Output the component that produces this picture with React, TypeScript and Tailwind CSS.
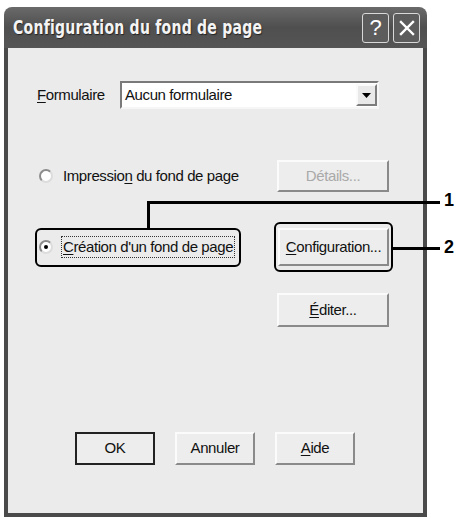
import React from "react";

const font = { fontFamily: '"Liberation Sans", Arial, sans-serif' };

// classic raised push button
function Btn({ label, u, rest, width = "w-[112px]", h = "h-[34px]", disabled = false, isDefault = false }: {
  label?: string;
  u: string;
  rest: string;
  width?: string;
  h?: string;
  disabled?: boolean;
  isDefault?: boolean;
}) {
  return (
    <div
      className={`${width} ${h} flex items-center justify-center bg-[#ededed] text-[15px] tracking-[-0.4px] ${
        isDefault ? "border-2 border-[#222]" : "border-2 border-t-[#fbfbfb] border-l-[#fbfbfb] border-b-[#8a8a8a] border-r-[#8a8a8a]"
      } ${disabled ? "text-[#a9a9a9]" : "text-[#111]"}`}
    >
      <span>
        {label}
        <span className="underline underline-offset-2">{u}</span>
        {rest}
      </span>
    </div>
  );
}

function Radio({ checked }: { checked?: boolean }) {
  return (
    <div className="w-[14px] h-[14px] rounded-full bg-white border-2 border-t-[#8c8c8c] border-l-[#8c8c8c] border-b-[#dcdcdc] border-r-[#dcdcdc] flex items-center justify-center">
      {checked && <div className="w-[4px] h-[4px] rounded-full bg-black" />}
    </div>
  );
}

export default function App() {
  return (
    <div className="relative w-[468px] h-[520px] bg-white pt-[7px] pl-[4px]" style={font}>
      <div className="w-[423px] h-[510px] flex flex-col">
        {/* title bar */}
        <div className="h-[41px] rounded-t-[8px] bg-gradient-to-b from-[#6a6a6a] via-[#4f4f4f] to-[#555] flex items-center pl-[9px] pr-[7px]">
          <span
            className="inline-block origin-left scale-x-[0.82] whitespace-nowrap text-[#f4f4f4] font-bold text-[19px] tracking-[0.3px] [text-shadow:1px_1px_1px_#222]"
            style={{ fontFamily: '"DejaVu Sans Condensed", "DejaVu Sans", sans-serif' }}
          >
            Configuration du fond de page
          </span>
          <div className="ml-auto flex gap-[4px]">
            <div className="w-[27px] h-[30px] rounded-[3px] border-[1.5px] border-[#d8d8d8] bg-[#5c5c5c] flex items-center justify-center text-white text-[22px] leading-none">
              ?
            </div>
            <div className="w-[27px] h-[30px] rounded-[3px] border-[1.5px] border-[#d8d8d8] bg-[#5c5c5c] flex items-center justify-center">
              <svg width="18" height="18" viewBox="0 0 18 18">
                <path d="M3 3 L15 15 M15 3 L3 15" stroke="white" strokeWidth="2.4" strokeLinecap="square" />
              </svg>
            </div>
          </div>
        </div>

        {/* body */}
        <div className="flex-1 bg-[#ebebeb] border-x-4 border-b-4 border-[#4a4a4a] text-[#111] flex flex-col">
          {/* Formulaire */}
          <div className="mt-[33px] flex items-center">
            <span className="ml-[29px] text-[15px] tracking-[-0.4px] w-[83px]">
              <span className="underline underline-offset-2">F</span>ormulaire
            </span>
            <div className="w-[259px] h-[28px] bg-white border-2 border-t-[#7a7a7a] border-l-[#7a7a7a] border-b-[#f6f6f6] border-r-[#f6f6f6] flex items-center">
              <span className="ml-[3px] text-[15px] tracking-[-0.4px]">Aucun formulaire</span>
              <div className="ml-auto w-[21px] h-[22px] bg-[#e9e9e9] border-2 border-t-[#fafafa] border-l-[#fafafa] border-b-[#7d7d7d] border-r-[#7d7d7d] flex items-center justify-center">
                <svg width="9" height="5" viewBox="0 0 9 5">
                  <path d="M0 0 H9 L4.5 5 Z" fill="#000" />
                </svg>
              </div>
            </div>
          </div>

          {/* Impression */}
          <div className="mt-[51px] flex items-center">
            <div className="ml-[31px]">
              <Radio />
            </div>
            <span className="ml-[10px] text-[15px] tracking-[-0.4px]">
              Impressio<span className="underline underline-offset-2">n</span> du fond de page
            </span>
            <div className="ml-auto mr-[34px]">
              <Btn u="" label="Dé" rest="tails..." disabled h="h-[32px]" />
            </div>
          </div>

          {/* Création */}
          <div className="mt-[30px] h-[50px] flex items-center">
            <div className="ml-[27px] w-[206px] h-[39px] rounded-[6px] border-[2.5px] border-black flex items-center">
              <div className="ml-[2px]">
                <Radio checked />
              </div>
              <span className="ml-[8px] px-[1px] border border-dotted border-[#333] text-[15px] tracking-[-0.4px] leading-[20px]">
                <span className="underline underline-offset-2">C</span>réation d'un fond de page
              </span>
            </div>
            <div className="ml-auto mr-[30px] w-[119px] h-[50px] rounded-[6px] border-[2.5px] border-black flex items-center justify-center">
              <Btn label="" u="C" rest="onfiguration..." width="w-[111px]" h="h-[38px]" />
            </div>
          </div>

          {/* Editer */}
          <div className="mt-[21px] flex">
            <div className="ml-auto mr-[34px]">
              <Btn label="" u="É" rest="diter..." />
            </div>
          </div>

          {/* bottom buttons */}
          <div className="mt-[105px] flex gap-[20px] pl-[67px]">
            <Btn label="OK" u="" rest="" width="w-[80px]" h="h-[33px]" isDefault />
            <Btn label="Annuler" u="" rest="" width="w-[80px]" h="h-[33px]" />
            <Btn label="" u="A" rest="ide" width="w-[80px]" h="h-[33px]" />
          </div>
        </div>
      </div>

      {/* callouts */}
      <div className="absolute left-[147px] top-[201px] w-[293px] h-[2.5px] bg-black" />
      <div className="absolute left-[147px] top-[201px] w-[2.5px] h-[27px] bg-black" />
      <span className="absolute left-[444px] top-[191px] text-[18px] font-bold leading-none">1</span>
      <div className="absolute left-[393px] top-[247px] w-[47px] h-[2.5px] bg-black" />
      <span className="absolute left-[444px] top-[238px] text-[18px] font-bold leading-none">2</span>
    </div>
  );
}
